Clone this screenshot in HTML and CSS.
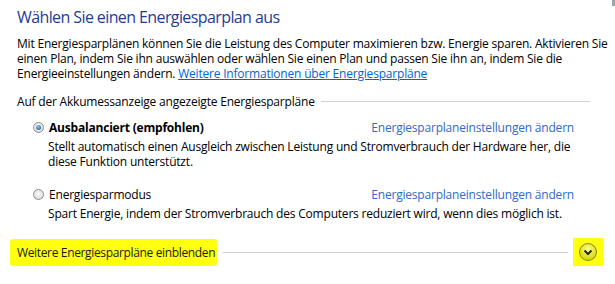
FILE: index.html
```html
<!DOCTYPE html>
<html lang="de">
<head>
    <meta charset="UTF-8" />
    <title>Energieoptionen</title>
    <link rel="stylesheet" href="styles.css">
</head>
<body>

<main class="panel">
    <h1>Wählen Sie einen Energiesparplan aus</h1>
    <p class="intro">Mit Energiesparplänen können Sie die Leistung des Computer maximieren bzw. Energie sparen. Aktivieren Sie einen Plan, indem Sie ihn auswählen oder wählen Sie einen Plan und passen Sie ihn an, indem Sie die Energieeinstellungen ändern. <a href="#">Weitere Informationen über Energiesparpläne</a></p>

    <div class="group-head">
        <span>Auf der Akkumessanzeige angezeigte Energiesparpläne</span>
        <hr>
    </div>

    <div class="plan first">
        <div class="plan-row">
            <label><span class="radio checked"></span><strong>Ausbalanciert (empfohlen)</strong></label>
            <a href="#">Energiesparplaneinstellungen ändern</a>
        </div>
        <p>Stellt automatisch einen Ausgleich zwischen Leistung und Stromverbrauch der Hardware her, die diese Funktion unterstützt.</p>
    </div>

    <div class="plan">
        <div class="plan-row">
            <label><span class="radio"></span>Energiesparmodus</label>
            <a href="#">Energiesparplaneinstellungen ändern</a>
        </div>
        <p>Spart Energie, indem der Stromverbrauch des Computers reduziert wird, wenn dies möglich ist.</p>
    </div>

    <div class="more">
        <span class="mark">Weitere Energiesparpläne einblenden</span>
        <hr>
        <span class="expand">
            <svg width="20" height="20" viewBox="0 0 20 20">
                <defs>
                    <radialGradient id="g" cx="50%" cy="35%" r="60%">
                        <stop offset="0" stop-color="#ffff9a"/>
                        <stop offset="1" stop-color="#d6d600"/>
                    </radialGradient>
                </defs>
                <circle cx="10" cy="10" r="8.5" fill="url(#g)" stroke="#8a8a20" stroke-width="1"/>
                <path d="M6.5 8.5 L10 12 L13.5 8.5" fill="none" stroke="#2b2b10" stroke-width="2"/>
            </svg>
        </span>
    </div>
</main>

</body>
</html>
```

FILE: styles.css
```css
body { margin: 0; background: #fff; color: #000; font-family: 'Open Sans', 'Noto Sans', sans-serif; font-size: 12px; letter-spacing: -0.2px; }
.panel { padding: 6px 0 0 17px; width: 580px; position: relative; }
.panel::after {
    content: ''; position: absolute; right: -18px; top: 0;
    width: 3px; height: 6px; background: #9aa4ae;
}
h1 { margin: 0; font-size: 16px; font-weight: normal; color: #1e3c96; line-height: 22px; letter-spacing: -0.6px; }
.intro { margin: 8px 0 0; line-height: 15px; width: 592px; }
a { color: #0066cc; text-decoration: none; }
.intro a { text-decoration: underline; display: inline-block; line-height: 15px; }
.group-head, .more { display: flex; align-items: center; gap: 6px; }
.group-head { margin-top: 12px; width: 573px; }
hr { flex: 1; border: none; border-top: 1px solid #d0d0d0; margin: 0; }
.plan { margin-left: 16px; width: 541px; }
.plan.first { margin-top: 9px; }
.plan + .plan { margin-top: 17px; }
.plan-row { display: flex; justify-content: space-between; align-items: center; height: 16px; }
.plan-row label { display: flex; align-items: center; gap: 5px; }
.plan a { color: #3169c6; }
.plan p { margin: 4px 0 0 15px; line-height: 15px; }
.radio {
    width: 11px; height: 11px; border-radius: 50%; box-sizing: border-box;
    border: 1px solid #8d8d8d; background: radial-gradient(circle at 50% 40%, #fafafa, #d4d4d4);
    position: relative;
}
.radio.checked::after {
    content: ''; position: absolute; left: 2px; top: 2px; width: 5px; height: 5px;
    border-radius: 50%; background: radial-gradient(circle at 40% 35%, #8ec8f4, #16507c);
}
.more { margin-top: 17px; width: 586px; }
.mark { background: #ffff10; padding: 5px 2px 5px 7px; margin-left: -7px; border-radius: 3px; color: #1a1a1a; letter-spacing: -0.35px; }
.expand { background: #ffff10; padding: 4px 5px; display: flex; margin-left: -1px; }
```
